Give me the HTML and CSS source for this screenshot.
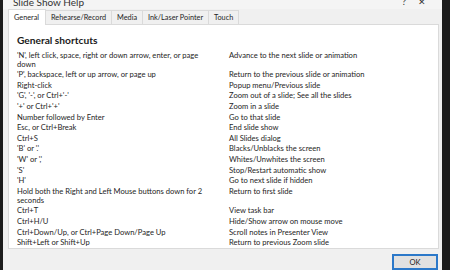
FILE: index.html
```html
<!DOCTYPE html>
<html>
<head>
<meta charset="utf-8">
<link rel="stylesheet" href="styles.css">
</head>
<body>
<div class="screen">
  <div class="edge-left"></div>
  <div class="dialog">
    <div class="titlebar">
      <span class="title">Slide Show Help</span>
      <span class="tbtns"><span class="tb">?</span><span class="tb">✕</span></span>
    </div>
    <div class="tabs">
      <div class="tab active">General</div>
      <div class="tab">Rehearse/Record</div>
      <div class="tab">Media</div>
      <div class="tab">Ink/Laser Pointer</div>
      <div class="tab">Touch</div>
    </div>
    <div class="panel">
      <h1 class="heading">General shortcuts</h1>
      <div class="grid">
        <div class="k">'N', left click, space, right or down arrow, enter, or page down</div><div class="v">Advance to the next slide or animation</div>
        <div class="k">'P', backspace, left or up arrow, or page up</div><div class="v">Return to the previous slide or animation</div>
        <div class="k">Right-click</div><div class="v">Popup menu/Previous slide</div>
        <div class="k">'G', '-', or Ctrl+'-'</div><div class="v">Zoom out of a slide; See all the slides</div>
        <div class="k">'+' or Ctrl+'+'</div><div class="v">Zoom in a slide</div>
        <div class="k">Number followed by Enter</div><div class="v">Go to that slide</div>
        <div class="k">Esc, or Ctrl+Break</div><div class="v">End slide show</div>
        <div class="k">Ctrl+S</div><div class="v">All Slides dialog</div>
        <div class="k">'B' or '.'</div><div class="v">Blacks/Unblacks the screen</div>
        <div class="k">'W' or ','</div><div class="v">Whites/Unwhites the screen</div>
        <div class="k">'S'</div><div class="v">Stop/Restart automatic show</div>
        <div class="k">'H'</div><div class="v">Go to next slide if hidden</div>
        <div class="k">Hold both the Right and Left Mouse buttons down for 2 seconds</div><div class="v">Return to first slide</div>
        <div class="k">Ctrl+T</div><div class="v">View task bar</div>
        <div class="k">Ctrl+H/U</div><div class="v">Hide/Show arrow on mouse move</div>
        <div class="k">Ctrl+Down/Up, or Ctrl+Page Down/Page Up</div><div class="v">Scroll notes in Presenter View</div>
        <div class="k">Shift+Left or Shift+Up</div><div class="v">Return to previous Zoom slide</div>
      </div>
    </div>
    <div class="footer">
      <button class="ok">OK</button>
    </div>
  </div>
  <div class="edge-right"></div>
</div>
</body>
</html>
```
FILE: styles.css
```css
html, body {
  margin: 0;
  padding: 0;
  width: 450px;
  height: 270px;
  overflow: hidden;
  background: #1b1b1b;
  font-family: Lato, "Open Sans", sans-serif;
  color: #1e1e1e;
}
.screen {
  display: flex;
  width: 450px;
  height: 270px;
}
.edge-left {
  width: 3px;
  background: #1c1c1c;
}
.edge-right {
  width: 8px;
  background: #1c1c1c;
}
.dialog {
  flex: 1;
  background: #f0f0f0;
  display: flex;
  flex-direction: column;
  padding: 0 3px 0 5px;
}
.titlebar {
  height: 11px;
  display: flex;
  align-items: flex-end;
  justify-content: space-between;
  overflow: hidden;
  background: #f4f4f4;
  margin: 0 -3px 0 -5px;
  padding: 0 16px 0 10px;
}
.title {
  font-size: 10px;
  line-height: 12px;
  margin-bottom: 1px;
  color: #333;
}
.tbtns {
  display: flex;
  gap: 12px;
  font-size: 9px;
  line-height: 12px;
  margin-bottom: 1px;
  color: #333;
}
.tabs {
  display: flex;
  height: 17px;
  align-items: flex-end;
}
.tab {
  font-size: 7.3px;
  height: 14px;
  line-height: 14px;
  padding: 0 5px;
  border: 1px solid #dadada;
  border-bottom: none;
  border-left: none;
  background: #f0f0f0;
  box-sizing: border-box;
}
.tab.active {
  background: #fff;
  height: 16px;
  line-height: 16px;
  border-left: 1px solid #dadada;
  margin-bottom: -1px;
  padding: 0 6px 0 5px;
  position: relative;
  z-index: 1;
}
.panel {
  background: #fff;
  border: 1px solid #dadada;
  height: 228px;
  box-sizing: border-box;
  padding: 8px 8px 0 8px;
}
.heading {
  margin: 0 0 3px 0;
  font-size: 10.2px;
  font-weight: bold;
  line-height: 14px;
  color: #1a1a1a;
}
.grid {
  display: grid;
  grid-template-columns: 198px 1fr;
  column-gap: 14px;
  font-size: 7.6px;
  line-height: 9px;
}
.k, .v {
  padding: 0.8px 0;
}
.footer {
  flex: 1;
  display: flex;
  justify-content: flex-end;
  align-items: flex-start;
  padding-top: 5px;
}
.ok {
  width: 46px;
  height: 16px;
  border: 2px solid #2b78c9;
  background: #e1e1e1;
  font-family: Lato, sans-serif;
  font-size: 7.6px;
  line-height: 10px;
  color: #222;
  padding: 0;
  margin-right: 1px;
}
```
